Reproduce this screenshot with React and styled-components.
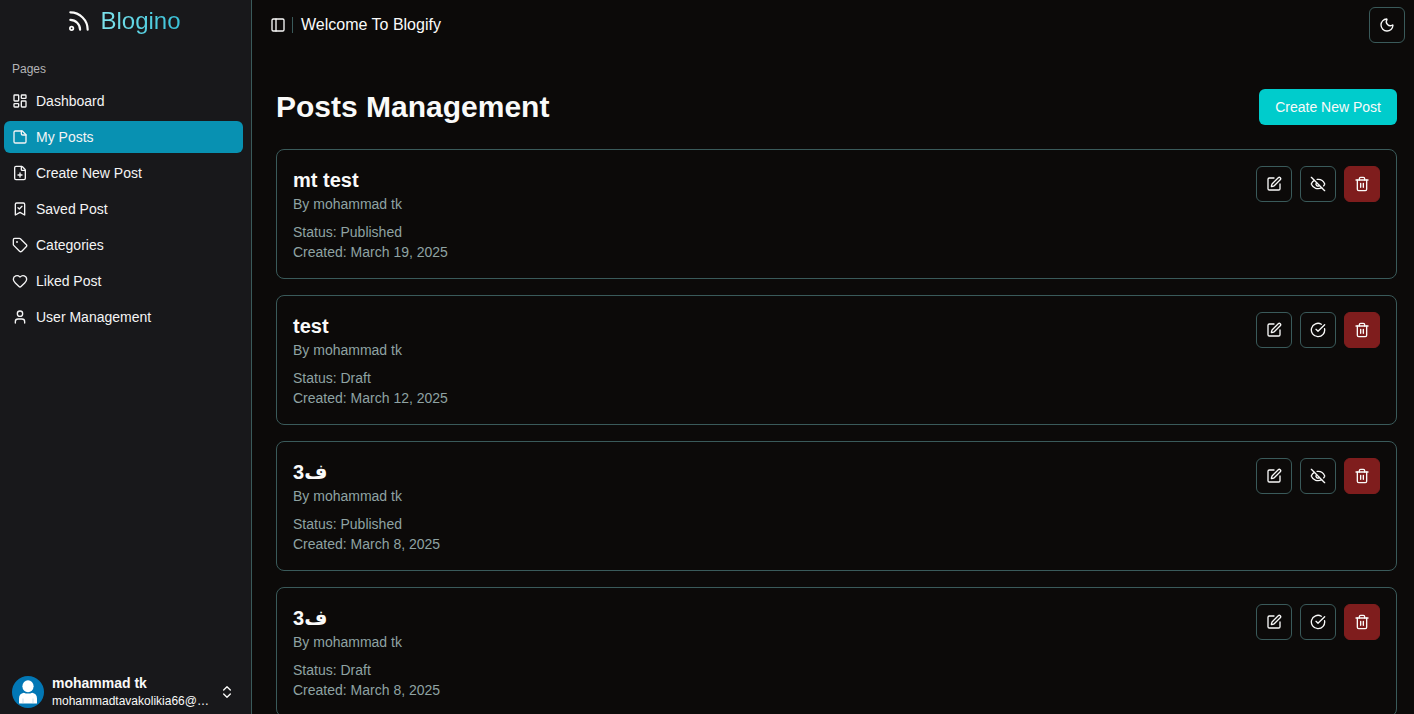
import React from "react";
import styled, { createGlobalStyle } from "styled-components";
import {
  BookmarkCheck,
  ChevronsUpDown,
  CircleCheckBig,
  EyeOff,
  FilePlus,
  Heart,
  LayoutDashboard,
  Moon,
  PanelLeft,
  SquarePen,
  Tag,
  User,
} from "lucide-react";

const GlobalStyle = createGlobalStyle`
  *, *::before, *::after {
    box-sizing: border-box;
  }
  body {
    margin: 0;
    background: #0c0a09;
    color: #fafaf9;
    font-family: "Liberation Sans", Arial, "DejaVu Sans", sans-serif;
    font-size: 14px;
    line-height: 20px;
  }
  h1, h2, p, ul {
    margin: 0;
    padding: 0;
  }
  button {
    font: inherit;
    color: inherit;
    cursor: pointer;
  }
  a {
    color: inherit;
    text-decoration: none;
  }
`;

const Layout = styled.div`
  display: flex;
  height: 100vh;
  overflow: hidden;
`;

const Sidebar = styled.aside`
  flex: 0 0 252px;
  min-width: 0;
  display: flex;
  flex-direction: column;
  padding: 5px 8px 0 4px;
  background: #18181b;
  border-right: 1px solid #3a5a5a;
`;

const Brand = styled.a`
  display: flex;
  align-items: center;
  justify-content: center;
  gap: 8px;
`;

const BrandName = styled.span`
  font-size: 24px;
  line-height: 32px;
  color: transparent;
  background: linear-gradient(to right, #7ee3ec, #38c1d9);
  background-clip: text;
  -webkit-background-clip: text;
`;

const Group = styled.nav`
  flex: 1;
  padding-top: 16px;
`;

const GroupLabel = styled.h2`
  padding: 0 8px;
  font-size: 12px;
  font-weight: 400;
  line-height: 32px;
  color: #b4b4b7;
`;

const Menu = styled.ul`
  display: flex;
  flex-direction: column;
  gap: 4px;
  list-style: none;
`;

const MenuLink = styled.a`
  display: flex;
  align-items: center;
  gap: 8px;
  height: 32px;
  padding: 0 8px;
  border-radius: 6px;
  color: #f4f4f5;
  background: ${({ $active }) => ($active ? "#0891b2" : "transparent")};
`;

const UserButton = styled.button`
  display: flex;
  align-items: center;
  gap: 8px;
  width: 100%;
  padding: 4px 8px;
  border: 0;
  background: transparent;
  text-align: left;

  svg {
    flex-shrink: 0;
  }
`;

const UserInfo = styled.span`
  flex: 1;
  min-width: 0;
`;

const UserName = styled.strong`
  display: block;
  line-height: 18px;
`;

const UserEmail = styled.span`
  display: block;
  font-size: 12px;
  line-height: 18px;
  overflow: hidden;
  white-space: nowrap;
  text-overflow: ellipsis;
`;

const Main = styled.main`
  flex: 1;
  min-width: 0;
`;

const TopBar = styled.header`
  display: flex;
  align-items: center;
  height: 50px;
  padding: 0 9px 0 12px;
`;

const TriggerButton = styled.button`
  display: flex;
  align-items: center;
  justify-content: center;
  width: 28px;
  height: 28px;
  padding: 0;
  border: 0;
  background: transparent;
`;

const Divider = styled.span`
  width: 1px;
  height: 16px;
  margin-right: 8px;
  background: #3a5a5a;
`;

const Welcome = styled.p`
  flex: 1;
  font-size: 16px;
  line-height: 24px;
`;

const IconButton = styled.button`
  display: flex;
  align-items: center;
  justify-content: center;
  width: 36px;
  height: 36px;
  padding: 0;
  border: 1px solid ${({ $danger }) => ($danger ? "#7f1d1d" : "#3a5a5a")};
  border-radius: 6px;
  background: ${({ $danger }) => ($danger ? "#7f1d1d" : "transparent")};
`;

const Content = styled.section`
  padding: 39px 17px 24px 24px;
`;

const PageHeader = styled.div`
  display: flex;
  align-items: center;
  justify-content: space-between;
  margin-bottom: 24px;
`;

const PageTitle = styled.h1`
  font-size: 30px;
  line-height: 36px;
`;

const CreateButton = styled.button`
  height: 36px;
  padding: 0 16px;
  border: 0;
  border-radius: 6px;
  background: #00cccc;
`;

const PostList = styled.div`
  display: flex;
  flex-direction: column;
  gap: 16px;
`;

const PostCard = styled.article`
  display: flex;
  justify-content: space-between;
  align-items: flex-start;
  padding: 16px;
  border: 1px solid #3a5a5a;
  border-radius: 8px;
`;

const PostTitle = styled.h2`
  font-size: 20px;
  line-height: 28px;
`;

const PostText = styled.p`
  color: #8fa3a3;
`;

const PostMeta = styled.div`
  margin-top: 8px;
`;

const Actions = styled.div`
  display: flex;
  gap: 8px;
`;

const StrokeIcon = ({ size = 16, children }) => (
  <svg
    width={size}
    height={size}
    viewBox="0 0 24 24"
    fill="none"
    stroke="currentColor"
    strokeWidth="2"
    strokeLinecap="round"
    strokeLinejoin="round"
  >
    {children}
  </svg>
);

const FeedIcon = () => (
  <StrokeIcon size={26}>
    <path d="M4 4a16 16 0 0 1 16 16" />
    <path d="M4 11a9 9 0 0 1 9 9" />
    <circle cx="5.200" cy="18.800" r="1.600" strokeWidth="1.600" />
  </StrokeIcon>
);

const NoteIcon = () => (
  <StrokeIcon>
    <path d="M15.500 3H5a2 2 0 0 0-2 2v14c0 1.100.9 2 2 2h14a2 2 0 0 0 2-2V8.500L15.500 3Z" />
    <path d="M14 3v4a2 2 0 0 0 2 2h5" />
  </StrokeIcon>
);

const TrashIcon = () => (
  <StrokeIcon>
    <path d="M3 6h18" />
    <path d="M19 6v14c0 1-1 2-2 2H7c-1 0-2-1-2-2V6" />
    <path d="M8 6V4c0-1 1-2 2-2h4c1 0 2 1 2 2v2" />
    <path d="M10 11v6M14 11v6" />
  </StrokeIcon>
);

const Avatar = () => (
  <svg width="32" height="32" viewBox="0 0 32 32">
    <circle cx="16" cy="16" r="16" fill="#0277b5" />
    <ellipse cx="16" cy="10.300" rx="5.600" ry="6" fill="#fff" />
    <path
      d="M7 27.500v-5c0-3.400 1.800-5.300 4.800-5.800 2.600 1.200 5.800 1.200 8.400 0 3 .5 4.800 2.400 4.800 5.800v5z"
      fill="#fff"
    />
    <path d="M11 22.500v5M21 22.500v5" stroke="#9fc9e0" strokeWidth=".6" />
  </svg>
);

const pages = [
  { name: "Dashboard", icon: LayoutDashboard },
  { name: "My Posts", icon: NoteIcon, active: true },
  { name: "Create New Post", icon: FilePlus },
  { name: "Saved Post", icon: BookmarkCheck },
  { name: "Categories", icon: Tag },
  { name: "Liked Post", icon: Heart },
  { name: "User Management", icon: User },
];

const posts = [
  { id: 1, title: "mt test", published: true, created: "March 19, 2025" },
  { id: 2, title: "test", published: false, created: "March 12, 2025" },
  { id: 3, title: "ف3", published: true, created: "March 8, 2025" },
  { id: 4, title: "ف3", published: false, created: "March 8, 2025" },
];

const Post = ({ post }) => (
  <PostCard>
    <div>
      <PostTitle>{post.title}</PostTitle>
      <PostText>By mohammad tk</PostText>
      <PostMeta>
        <PostText>Status: {post.published ? "Published" : "Draft"}</PostText>
        <PostText>Created: {post.created}</PostText>
      </PostMeta>
    </div>
    <Actions>
      <IconButton aria-label="Edit post">
        <SquarePen size={16} />
      </IconButton>
      <IconButton aria-label={post.published ? "Unpublish post" : "Publish post"}>
        {post.published ? <EyeOff size={16} /> : <CircleCheckBig size={16} />}
      </IconButton>
      <IconButton $danger aria-label="Delete post">
        <TrashIcon />
      </IconButton>
    </Actions>
  </PostCard>
);

const App = () => {
  return (
    <Layout>
      <GlobalStyle />
      <Sidebar>
        <Brand href="#">
          <FeedIcon />
          <BrandName>Blogino</BrandName>
        </Brand>
        <Group>
          <GroupLabel>Pages</GroupLabel>
          <Menu>
            {pages.map(({ name, icon: Icon, active }) => (
              <li key={name}>
                <MenuLink href="#" $active={active}>
                  <Icon size={16} />
                  {name}
                </MenuLink>
              </li>
            ))}
          </Menu>
        </Group>
        <UserButton>
          <Avatar />
          <UserInfo>
            <UserName>mohammad tk</UserName>
            <UserEmail>mohammadtavakolikia66@gmail.com</UserEmail>
          </UserInfo>
          <ChevronsUpDown size={16} />
        </UserButton>
      </Sidebar>
      <Main>
        <TopBar>
          <TriggerButton aria-label="Toggle sidebar">
            <PanelLeft size={16} />
          </TriggerButton>
          <Divider />
          <Welcome>Welcome To Blogify</Welcome>
          <IconButton aria-label="Toggle theme">
            <Moon size={16} />
          </IconButton>
        </TopBar>
        <Content>
          <PageHeader>
            <PageTitle>Posts Management</PageTitle>
            <CreateButton>Create New Post</CreateButton>
          </PageHeader>
          <PostList>
            {posts.map((post) => (
              <Post key={post.id} post={post} />
            ))}
          </PostList>
        </Content>
      </Main>
    </Layout>
  );
};

export default App;
